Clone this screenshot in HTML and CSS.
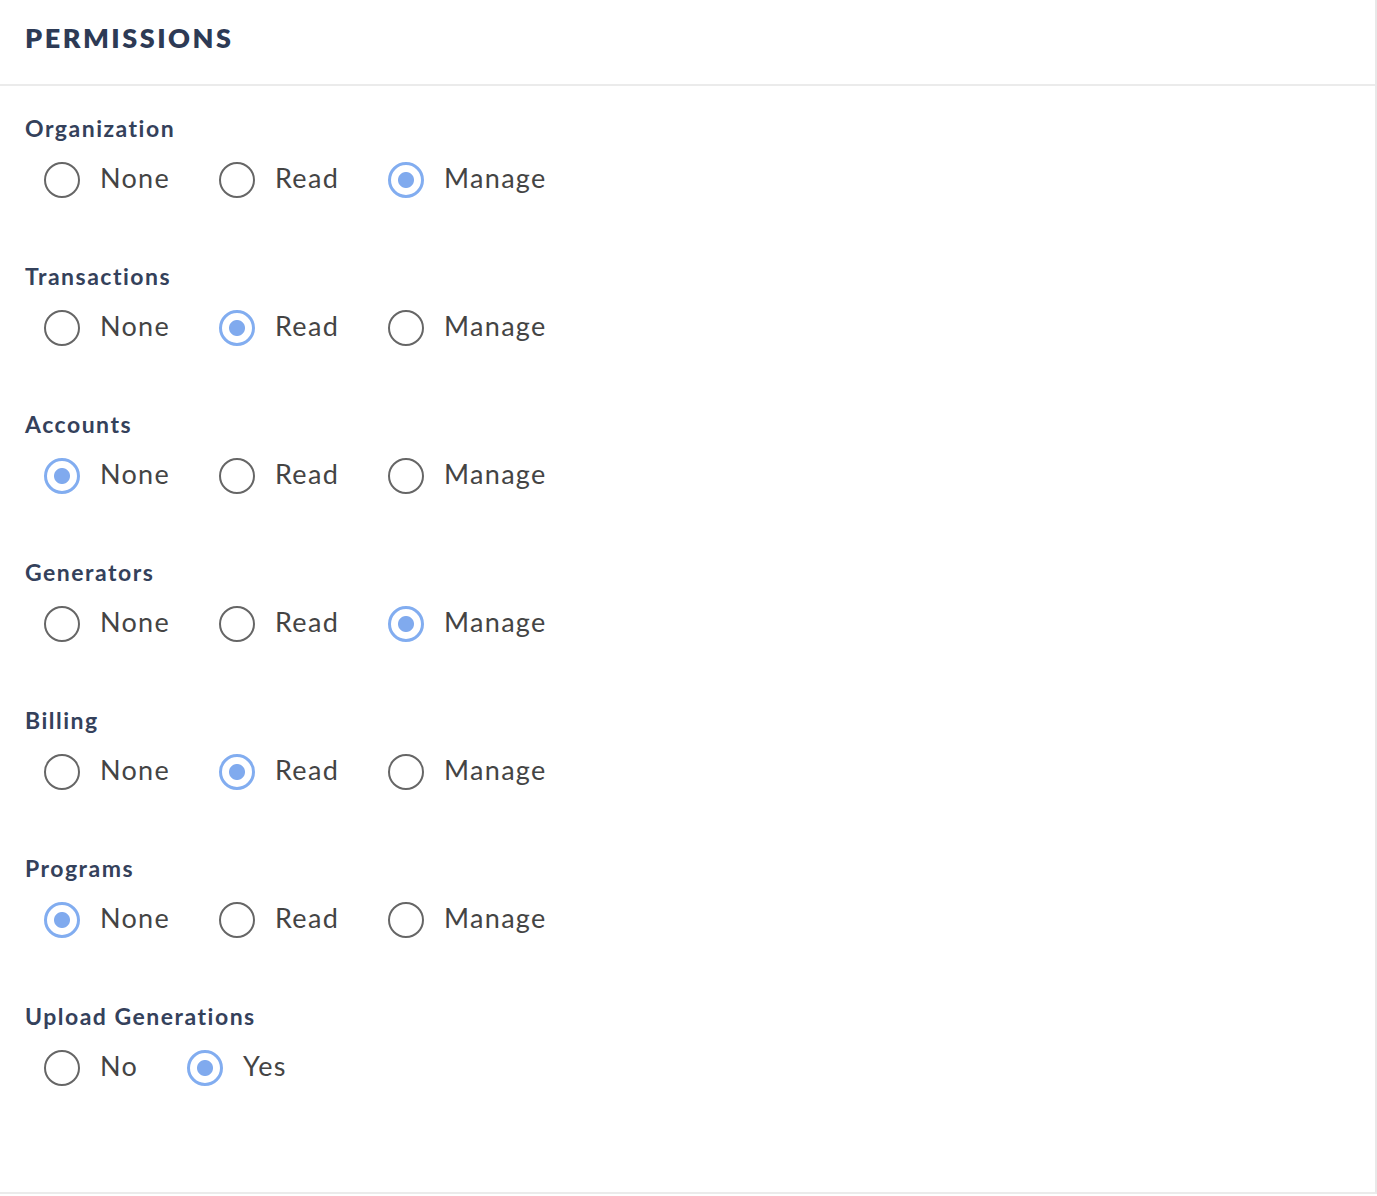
FILE: index.html
```html
<!DOCTYPE html>
<html lang="en">
<head>
<meta charset="utf-8">
<title>Permissions</title>
<link rel="stylesheet" href="styles.css">
</head>
<body>
<div class="panel">
  <div class="panel-header"><h2 class="title">PERMISSIONS</h2></div>
  <div class="panel-body">
    <div class="group">
      <div class="group-label">Organization</div>
      <div class="options">
        <label class="option"><span class="radio"></span><span class="opt-text">None</span></label>
        <label class="option"><span class="radio"></span><span class="opt-text">Read</span></label>
        <label class="option"><span class="radio checked"></span><span class="opt-text">Manage</span></label>
      </div>
    </div>
    <div class="group">
      <div class="group-label">Transactions</div>
      <div class="options">
        <label class="option"><span class="radio"></span><span class="opt-text">None</span></label>
        <label class="option"><span class="radio checked"></span><span class="opt-text">Read</span></label>
        <label class="option"><span class="radio"></span><span class="opt-text">Manage</span></label>
      </div>
    </div>
    <div class="group">
      <div class="group-label">Accounts</div>
      <div class="options">
        <label class="option"><span class="radio checked"></span><span class="opt-text">None</span></label>
        <label class="option"><span class="radio"></span><span class="opt-text">Read</span></label>
        <label class="option"><span class="radio"></span><span class="opt-text">Manage</span></label>
      </div>
    </div>
    <div class="group">
      <div class="group-label">Generators</div>
      <div class="options">
        <label class="option"><span class="radio"></span><span class="opt-text">None</span></label>
        <label class="option"><span class="radio"></span><span class="opt-text">Read</span></label>
        <label class="option"><span class="radio checked"></span><span class="opt-text">Manage</span></label>
      </div>
    </div>
    <div class="group">
      <div class="group-label">Billing</div>
      <div class="options">
        <label class="option"><span class="radio"></span><span class="opt-text">None</span></label>
        <label class="option"><span class="radio checked"></span><span class="opt-text">Read</span></label>
        <label class="option"><span class="radio"></span><span class="opt-text">Manage</span></label>
      </div>
    </div>
    <div class="group">
      <div class="group-label">Programs</div>
      <div class="options">
        <label class="option"><span class="radio checked"></span><span class="opt-text">None</span></label>
        <label class="option"><span class="radio"></span><span class="opt-text">Read</span></label>
        <label class="option"><span class="radio"></span><span class="opt-text">Manage</span></label>
      </div>
    </div>
    <div class="group">
      <div class="group-label">Upload Generations</div>
      <div class="options">
        <label class="option"><span class="radio"></span><span class="opt-text">No</span></label>
        <label class="option"><span class="radio checked"></span><span class="opt-text">Yes</span></label>
      </div>
    </div>
  </div>
</div>
</body>
</html>
```
FILE: styles.css
```css
html, body {
  margin: 0;
  padding: 0;
  background: #ffffff;
}
body {
  font-family: Lato, "Open Sans", "Liberation Sans", sans-serif;
}
.panel {
  width: 1375px;
  height: 1192px;
  border-right: 2px solid #e8e8e8;
  border-bottom: 2px solid #ebebeb;
  background: #fff;
  display: flex;
  flex-direction: column;
}
.panel-header {
  height: 84px;
  border-bottom: 2px solid #ebebeb;
  padding: 0 25px;
  display: flex;
  align-items: center;
  box-sizing: content-box;
}
.title {
  margin: 0 0 8px 0;
  font-size: 27px;
  font-weight: 800;
  letter-spacing: 2.5px;
  color: #2d3a55;
  line-height: 36px;
}
.panel-body {
  padding: 28px 25px 0 25px;
  display: flex;
  flex-direction: column;
  gap: 62px;
}
.group {
  display: flex;
  flex-direction: column;
  gap: 18px;
}
.group-label {
  font-size: 23px;
  font-weight: 700;
  letter-spacing: 1.5px;
  line-height: 28px;
  color: #34415b;
}
.options {
  display: flex;
  align-items: center;
  gap: 49px;
  height: 40px;
  padding-left: 19px;
}
.option {
  display: flex;
  align-items: center;
  gap: 20px;
}
.radio {
  width: 36px;
  height: 36px;
  box-sizing: border-box;
  border-radius: 50%;
  border: 2.5px solid #666666;
  background: #fff;
  flex: none;
}
.radio.checked {
  border: 3px solid #82adf0;
  background: radial-gradient(circle, #80aaee 0 7.5px, #fff 8.5px);
}
.opt-text {
  font-size: 27px;
  letter-spacing: 1.3px;
  line-height: 36px;
  color: #444444;
  margin-top: -4px;
}
```
